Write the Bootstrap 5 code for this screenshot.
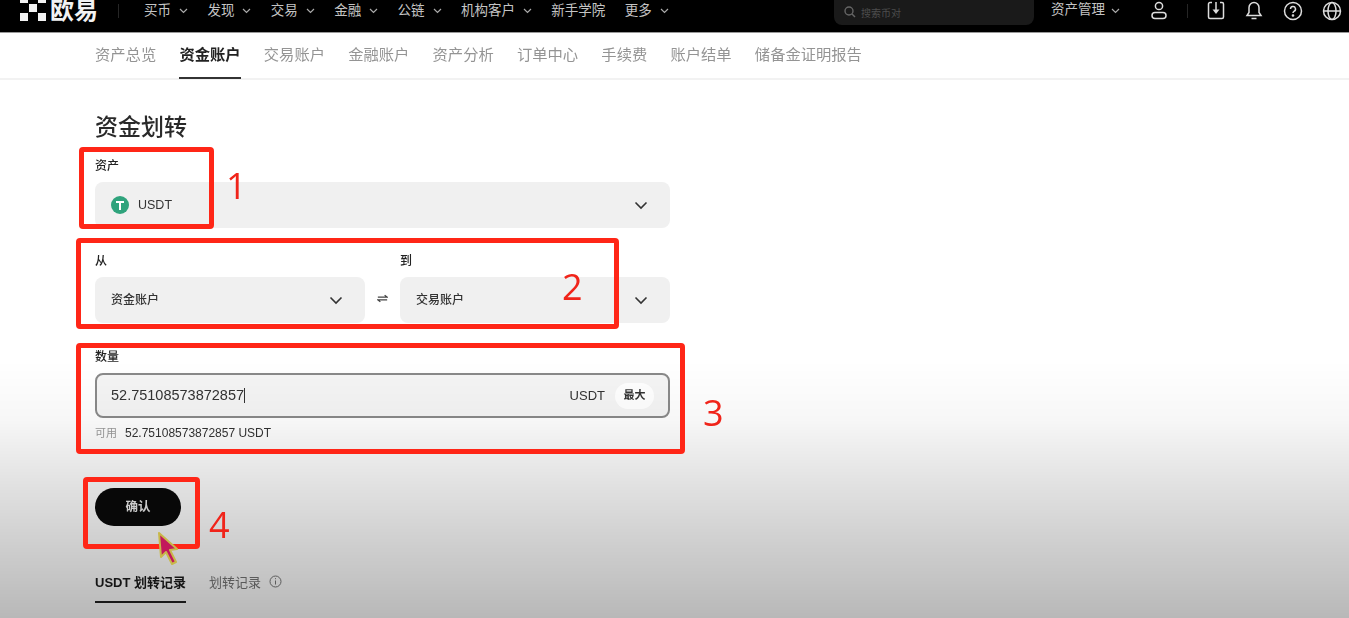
<!DOCTYPE html>
<html lang="zh-CN">
<head>
    <meta charset="UTF-8">
    <meta name="viewport" content="width=device-width, initial-scale=1.0">
    <title>资金划转</title>
    <link href="https://cdn.jsdelivr.net/npm/bootstrap@5.3.2/dist/css/bootstrap.min.css" rel="stylesheet">
    <style>
        html, body { height: 618px; overflow: hidden; }
        body { font-family: "Liberation Sans", "Noto Sans CJK SC", sans-serif; background: #fff; color: #1a1a1a; position: relative; }
        .page-soft { filter: blur(.6px); height: 618px; }
        .top-bar { height: 33px; background: #000; color: #c4c4c4; font-size: 13.5px; padding: 0 0 11px 20px; overflow: hidden; border-bottom: 1px solid #999; }
        .logo-box { width: 26px; height: 26px; margin-top: -5px; display: block; flex: none; }
        .logo-text { color: #f2f2f2; font-size: 24px; font-weight: 700; line-height: 20px; margin-left: 4px; width: 48px; white-space: nowrap; flex: none; }
        .top-sep { width: 1px; height: 14px; background: #262626; margin: 0 25px 0 20px; flex: none; }
        .top-menu { gap: 19.4px; width: 550px; flex: none; margin-right: 140px; }
        .top-menu span { display: inline-flex; align-items: center; gap: 8px; white-space: nowrap; line-height: 20px; }
        .top-search { width: 200px; height: 25px; margin: -8px 0 -11px 0; background: #1a1a1a; border-radius: 0 0 8px 8px; color: #4d4d4d; font-size: 10px; padding: 6px 0 0 10px; gap: 5px; flex: none; }
        .top-asset { margin-left: 17px; gap: 6px; white-space: nowrap; flex: none; }
        .top-icons { gap: 19px; margin-right: 7px; }
        .top-icons svg { display: block; flex: none; }
        .top-icons .top-sep { margin: 0; }
        .sub-nav { height: 47px; border-bottom: 2px solid #f2f2f2; padding-left: 95px; gap: 23.2px; font-size: 15.3px; color: #949494; }
        .sub-nav span { height: 45px; line-height: 44px; white-space: nowrap; }
        .sub-nav .on { color: #222; font-weight: 700; border-bottom: 2px solid #333; height: 46px; }
        .form-wrap { width: 575px; margin-left: 95px; }
        .form-title { font-size: 23px; font-weight: 500; line-height: 30px; margin: 32px 0 0; color: #2a2a2a; }
        .field-label { font-size: 12px; font-weight: 500; line-height: 16px; color: #222; margin-bottom: 8px; }
        .asset-group { margin-top: 16px; }
        .route-group { margin-top: 25px; }
        .amount-group { margin-top: 26px; }
        .pick-box { height: 46px; background: #f0f0f0; border-radius: 8px; padding: 0 22px 0 16px; font-size: 12px; font-weight: 500; color: #333; }
        .pick-usdt { font-size: 12.5px; }
        .usdt-dot { width: 18px; height: 18px; margin-right: 9px; }
        .swap-mark { width: 35px; flex: none; padding-bottom: 20px; }
        .half-box { width: 270px; }
        .amount-box { height: 45px; border: 2px solid #8a8a8a; border-radius: 8px; padding: 0 14px 0 14px; font-size: 14.5px; color: #333; background: #f5f5f5; }
        .amount-unit { font-size: 13px; }
        .caret-line { width: 1px; height: 15px; background: #333; }
        .max-pill { width: 39px; height: 26px; border-radius: 13px; background: #fff; font-size: 11px; font-weight: 700; margin-left: 10px; }
        .hint-line { font-size: 12px; line-height: 14px; color: #333; margin-top: 8px; }
        .hint-line em { font-style: normal; color: #999; font-size: 11px; margin-right: 8px; }
        .ok-btn { width: 86px; height: 38px; border-radius: 19px; background: #0a0a0a; color: #eee; font-size: 12.5px; font-weight: 700; border: 0; margin-top: 48px; padding: 0; display: block; }
        .rec-tabs { margin-top: 49px; font-size: 13px; gap: 23px; }
        .rec-tabs span { white-space: nowrap; }
        .rec-on { font-weight: 700; color: #1c1c1c; border-bottom: 2px solid #222; padding-bottom: 10px; width: 91px; line-height: 16px; }
        .rec-off { color: #767676; line-height: 16px; gap: 8px; }
        .fade-layer { position: absolute; inset: 0; pointer-events: none; background: linear-gradient(to bottom, rgba(0,0,0,0) 0, rgba(0,0,0,0) 360px, rgba(0,0,0,.03) 420px, rgba(0,0,0,.13) 495px, rgba(0,0,0,.28) 618px); }
        .mark-box { position: absolute; border: 5px solid #ff2617; border-radius: 4px; pointer-events: none; }
        .mark-one { left: 79px; top: 147px; width: 135px; height: 82px; }
        .mark-two { left: 76px; top: 238px; width: 543px; height: 91px; }
        .mark-three { left: 76px; top: 343px; width: 609px; height: 111px; }
        .mark-four { left: 83px; top: 477px; width: 117px; height: 72px; }
        .mark-num { position: absolute; color: #f0241a; font-family: "Open Sans", sans-serif; font-size: 36px; line-height: 40px; }
        .num-one { left: 226px; top: 166px; }
        .num-two { left: 562px; top: 267px; }
        .num-three { left: 703px; top: 393px; }
        .num-four { left: 209px; top: 505px; }
        .mark-cursor { position: absolute; left: 153px; top: 529px; filter: blur(.5px); }
    </style>
</head>
<body>
<div class="page-soft">
    <!-- Menu superior -->
    <div class="top-bar d-flex align-items-center">
        <svg class="logo-box" viewBox="0 0 26 26"><g fill="#f2f2f2"><rect x="0" y="0" width="8" height="8"/><rect x="18" y="0" width="8" height="8"/><rect x="9" y="9" width="8" height="8"/><rect x="0" y="18" width="8" height="8"/><rect x="18" y="18" width="8" height="8"/></g></svg>
        <div class="logo-text">欧易</div>
        <div class="top-sep"></div>
        <div class="top-menu d-flex align-items-center">
            <span>买币 <svg width="9" height="6" viewBox="0 0 9 6"><path d="M1 1l3.5 3.5L8 1" fill="none" stroke="#aaa" stroke-width="1.2"/></svg></span>
            <span>发现 <svg width="9" height="6" viewBox="0 0 9 6"><path d="M1 1l3.5 3.5L8 1" fill="none" stroke="#aaa" stroke-width="1.2"/></svg></span>
            <span>交易 <svg width="9" height="6" viewBox="0 0 9 6"><path d="M1 1l3.5 3.5L8 1" fill="none" stroke="#aaa" stroke-width="1.2"/></svg></span>
            <span>金融 <svg width="9" height="6" viewBox="0 0 9 6"><path d="M1 1l3.5 3.5L8 1" fill="none" stroke="#aaa" stroke-width="1.2"/></svg></span>
            <span>公链 <svg width="9" height="6" viewBox="0 0 9 6"><path d="M1 1l3.5 3.5L8 1" fill="none" stroke="#aaa" stroke-width="1.2"/></svg></span>
            <span>机构客户 <svg width="9" height="6" viewBox="0 0 9 6"><path d="M1 1l3.5 3.5L8 1" fill="none" stroke="#aaa" stroke-width="1.2"/></svg></span>
            <span>新手学院</span>
            <span>更多 <svg width="9" height="6" viewBox="0 0 9 6"><path d="M1 1l3.5 3.5L8 1" fill="none" stroke="#aaa" stroke-width="1.2"/></svg></span>
        </div>
        <div class="top-search d-flex align-items-start">
            <svg width="12" height="12" viewBox="0 0 12 12"><circle cx="5" cy="5" r="4" fill="none" stroke="#666" stroke-width="1.4"/><path d="M8 8l3 3" stroke="#666" stroke-width="1.4"/></svg>
            <span>搜索币对</span>
        </div>
        <div class="top-asset d-flex align-items-center">资产管理 <svg width="9" height="6" viewBox="0 0 9 6"><path d="M1 1l3.5 3.5L8 1" fill="none" stroke="#aaa" stroke-width="1.2"/></svg></div>
        <div class="top-icons d-flex align-items-center ms-auto">
            <svg width="18" height="20" viewBox="0 0 18 20" fill="none" stroke="#ddd" stroke-width="1.5"><circle cx="9" cy="5" r="3.6"/><rect x="2" y="11.5" width="14" height="6" rx="3"/></svg>
            <div class="top-sep"></div>
            <svg width="18" height="20" viewBox="0 0 18 20" fill="none" stroke="#ddd" stroke-width="1.5"><path d="M5 1.5H3a1.5 1.5 0 0 0-1.5 1.5v13A1.5 1.5 0 0 0 3 17.5h12a1.5 1.5 0 0 0 1.5-1.5V3A1.5 1.5 0 0 0 15 1.5h-2"/><path d="M9 1v8"/><path d="M5.5 8.5h7L9 13z" fill="#ddd" stroke="none"/></svg>
            <svg width="20" height="20" viewBox="0 0 18 20" fill="none" stroke="#ddd" stroke-width="1.5"><path d="M9 1.5a5 5 0 0 0-5 5v5l-2 3h14l-2-3v-5a5 5 0 0 0-5-5z"/><path d="M6.5 17.5h5"/></svg>
            <svg width="20" height="20" viewBox="0 0 20 20" fill="none" stroke="#ddd" stroke-width="1.5"><circle cx="10" cy="10" r="8.5"/><path d="M7.5 8a2.5 2.5 0 1 1 3.5 2.3c-.7.4-1 .8-1 1.7"/><circle cx="10" cy="14.5" r=".6" fill="#ddd"/></svg>
            <svg width="20" height="20" viewBox="0 0 20 20" fill="none" stroke="#ddd" stroke-width="1.5"><circle cx="10" cy="10" r="8.5"/><ellipse cx="10" cy="10" rx="4" ry="8.5"/><path d="M1.5 10h17"/></svg>
        </div>
    </div>

    <div class="sub-nav d-flex">
        <span>资产总览</span>
        <span class="on">资金账户</span>
        <span>交易账户</span>
        <span>金融账户</span>
        <span>资产分析</span>
        <span>订单中心</span>
        <span>手续费</span>
        <span>账户结单</span>
        <span>储备金证明报告</span>
    </div>

    <!-- Conteúdo principal -->
    <div class="form-wrap">
        <h2 class="form-title">资金划转</h2>
        <div class="asset-group">
            <div class="field-label">资产</div>
            <div class="pick-box pick-usdt d-flex align-items-center justify-content-between">
                <div class="d-flex align-items-center">
                    <svg class="usdt-dot" viewBox="0 0 18 18"><circle cx="9" cy="9" r="9" fill="#2fa37c"/><path d="M5 5h8v2H10v7H8V7H5z" fill="#fff"/></svg>
                    USDT
                </div>
                <svg width="14" height="9" viewBox="0 0 14 9"><path d="M1.5 1.5L7 7l5.500-5.500" fill="none" stroke="#333" stroke-width="1.6"/></svg>
            </div>
        </div>
        <div class="route-group d-flex">
            <div class="half-box">
                <div class="field-label">从</div>
                <div class="pick-box d-flex align-items-center justify-content-between">
                    资金账户
                    <svg width="14" height="9" viewBox="0 0 14 9"><path d="M1.5 1.5L7 7l5.500-5.500" fill="none" stroke="#333" stroke-width="1.6"/></svg>
                </div>
            </div>
            <div class="swap-mark d-flex align-items-end justify-content-center">
                <svg width="11" height="9" viewBox="0 0 13 10"><path d="M1 3.500h11L9 1M12 6.500H1L4 9" fill="none" stroke="#444" stroke-width="1.500"/></svg>
            </div>
            <div class="half-box">
                <div class="field-label">到</div>
                <div class="pick-box d-flex align-items-center justify-content-between">
                    交易账户
                    <svg width="14" height="9" viewBox="0 0 14 9"><path d="M1.5 1.5L7 7l5.500-5.500" fill="none" stroke="#333" stroke-width="1.6"/></svg>
                </div>
            </div>
        </div>
        <div class="amount-group">
            <div class="field-label">数量</div>
            <div class="amount-box d-flex align-items-center">
                <span>52.75108573872857</span><span class="caret-line"></span>
                <span class="amount-unit ms-auto">USDT</span>
                <span class="max-pill d-flex align-items-center justify-content-center">最大</span>
            </div>
            <div class="hint-line"><em>可用</em>52.75108573872857 USDT</div>
        </div>
        <button type="button" class="ok-btn">确认</button>
        <div class="rec-tabs d-flex">
            <span class="rec-on">USDT 划转记录</span>
            <span class="rec-off d-flex">划转记录
                <svg width="13" height="13" viewBox="0 0 13 13" fill="none" stroke="#777"><circle cx="6.500" cy="6.500" r="5.500"/><path d="M6.500 5.500v4M6.500 3.200v1"/></svg>
            </span>
        </div>
    </div>
</div>

<div class="fade-layer"></div>

<!-- Marcas vermelhas -->
<div class="mark-box mark-one"></div>
<div class="mark-box mark-two"></div>
<div class="mark-box mark-three"></div>
<div class="mark-box mark-four"></div>
<div class="mark-num num-one">1</div>
<div class="mark-num num-two">2</div>
<div class="mark-num num-three">3</div>
<div class="mark-num num-four">4</div>
<svg class="mark-cursor" width="30" height="42" viewBox="0 0 30 42"><path d="M6 4l2 24 5-5 6 12 4-2-6-12 7-1z" fill="#c2185b" stroke="#c8b84a" stroke-width="2" stroke-linejoin="round"/></svg>
</body>
</html>
